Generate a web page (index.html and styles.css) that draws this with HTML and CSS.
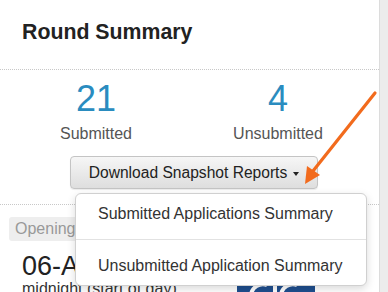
FILE: index.html
```html
<!DOCTYPE html>
<html>
<head>
<meta charset="utf-8">
<link rel="stylesheet" href="styles.css">
</head>
<body>
<div class="panel">
  <div class="header"><h2 class="title">Round Summary</h2></div>
  <div class="stats">
    <div class="stat"><div class="num">21</div><div class="lbl">Submitted</div></div>
    <div class="stat"><div class="num">4</div><div class="lbl">Unsubmitted</div></div>
  </div>
  <div class="actions">
    <button class="btn">Download Snapshot Reports <span class="caret"></span></button>
  </div>
  <div class="dates">
    <div class="date-left">
      <span class="tag">Opening</span>
      <div class="big">06-Apr-2015</div>
      <div class="small">midnight (start of day)</div>
    </div>
    <div class="date-icon">
      <svg width="78" height="20" viewBox="0 0 78 20">
        <rect x="0" y="0" width="78" height="20" fill="#1f4f8f"/>
        <path d="M14 14 A12 12 0 0 1 30 4" stroke="#fff" stroke-width="4" fill="none"/>
        <rect x="36" y="0" width="4" height="20" fill="#fff"/>
        <path d="M44 14 A12 12 0 0 1 60 4" stroke="#fff" stroke-width="4" fill="none"/>
      </svg>
    </div>
  </div>
</div>
<div class="menu">
  <div class="item">Submitted Applications Summary</div>
  <div class="divider"></div>
  <div class="item">Unsubmitted Application Summary</div>
</div>
<svg class="arrow" width="388" height="292" viewBox="0 0 388 292">
  <line x1="375" y1="93" x2="313" y2="171" stroke="#f26b1d" stroke-width="3.2" stroke-linecap="round"/>
  <polygon points="305,184 307,166 320,175" fill="#f26b1d"/>
</svg>
</body>
</html>
```
FILE: styles.css
```css
html, body {
  margin: 0;
  padding: 0;
}
body {
  background: #ececec;
  font-family: "Liberation Sans", Arial, sans-serif;
  color: #333;
  width: 388px;
  height: 292px;
  overflow: hidden;
  position: relative;
}
.panel {
  width: 379px;
  height: 292px;
  background: #fff;
  border-right: 1px solid #dcdcdc;
  overflow: hidden;
}
.header {
  height: 70px;
  box-sizing: border-box;
  padding: 0 0 4px 22px;
  display: flex;
  align-items: center;
  border-bottom: 1px dotted #c8c8c8;
}
.title {
  margin: 0;
  font-size: 21.3px;
  font-weight: bold;
  color: #222;
}
.stats {
  display: grid;
  grid-template-columns: 182px 182px;
  padding: 9px 0 0 5px;
}
.stat {
  text-align: center;
}
.num {
  font-size: 36px;
  line-height: 40px;
  color: #2a8cbf;
}
.lbl {
  margin-top: 5px;
  font-size: 16px;
  line-height: 20px;
  color: #555;
}
.actions {
  padding: 12px 0 15px 70px;
  border-bottom: 1px dotted #c8c8c8;
}
.btn {
  width: 248px;
  height: 33px;
  border: 1px solid #c4c4c4;
  border-radius: 4px;
  background: linear-gradient(#f6f6f6, #dedede);
  box-shadow: 0 1px 1px rgba(0,0,0,0.08);
  font-family: "Liberation Sans", Arial, sans-serif;
  font-size: 15.6px;
  color: #222;
  padding: 0;
  display: flex;
  align-items: center;
  justify-content: center;
  gap: 6px;
}
.caret {
  display: inline-block;
  width: 0;
  height: 0;
  border-left: 3px solid transparent;
  border-right: 3px solid transparent;
  border-top: 4px solid #222;
  margin-top: 2px;
}
.dates {
  display: flex;
  padding: 12px 0 0 9px;
}
.date-left {
  width: 228px;
}
.tag {
  display: inline-block;
  background: #eee;
  color: #999;
  font-size: 16px;
  line-height: 24px;
  padding: 0 6px;
  border-radius: 3px;
}
.big {
  margin: 10px 0 0 13px;
  font-size: 27px;
  line-height: 30px;
  color: #222;
}
.small {
  margin-left: 13px;
  font-size: 16px;
  line-height: 16px;
  color: #333;
}
.date-icon {
  padding-top: 64px;
}
.date-icon svg {
  display: block;
}
.menu {
  position: absolute;
  left: 75px;
  top: 193px;
  width: 292px;
  height: 93px;
  box-sizing: border-box;
  background: #fff;
  border: 1px solid #d0d0d0;
  border-radius: 6px;
  box-shadow: 0 3px 8px rgba(0,0,0,0.15);
  padding: 9px 0;
}
.item {
  font-size: 16px;
  line-height: 22px;
  padding: 0 0 0 22px;
  color: #333;
}
.divider {
  height: 1px;
  background: #e2e2e2;
  margin: 14px 0 15px 0;
}
.arrow {
  position: absolute;
  left: 0;
  top: 0;
  pointer-events: none;
}
```
